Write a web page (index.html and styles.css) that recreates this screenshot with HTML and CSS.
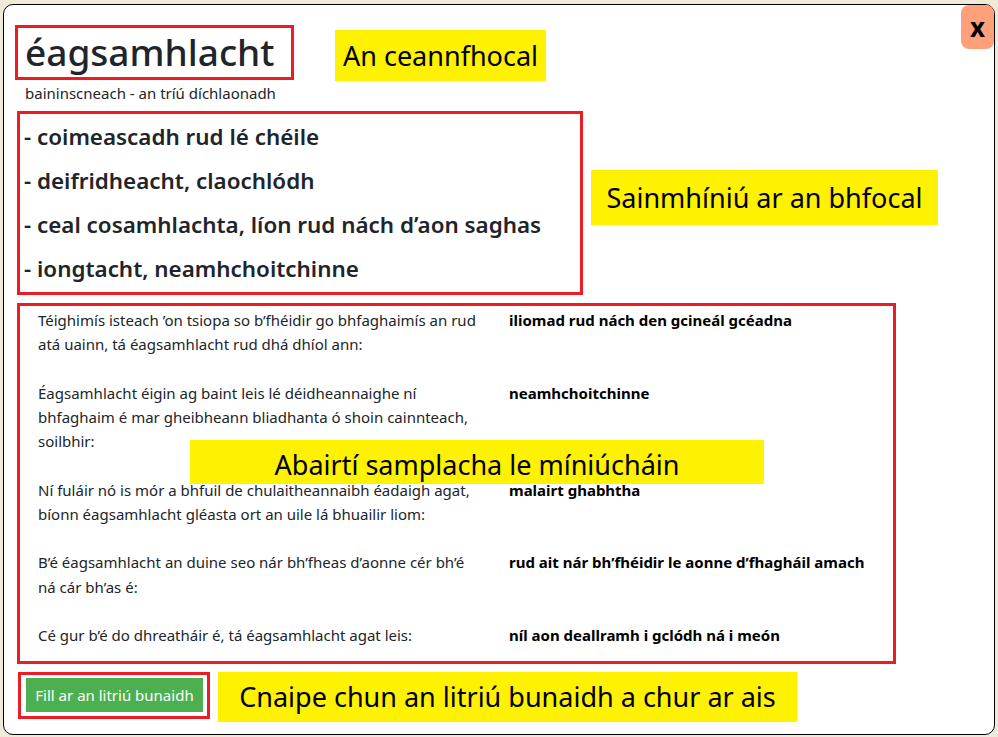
FILE: index.html
```html
<!DOCTYPE html>
<html lang="ga">
<head>
<meta charset="utf-8">
<title>éagsamhlacht</title>
<link rel="stylesheet" href="styles.css">
</head>
<body>
<div class="panel">
  <button class="close" type="button">x</button>

  <div class="headword-box"><h1 class="headword">éagsamhlacht</h1></div>
  <div class="gender">baininscneach - an tríú díchlaonadh</div>

  <div class="defs">
    <div class="def">- coimeascadh rud lé chéile</div>
    <div class="def">- deifridheacht, claochlódh</div>
    <div class="def">- ceal cosamhlachta, líon rud nách d’aon saghas</div>
    <div class="def">- iongtacht, neamhchoitchinne</div>
  </div>

  <div class="examples">
    <div class="ex">Téighimís isteach ’on tsiopa so b’fhéidir go bhfaghaimís an rud atá uainn, tá éagsamhlacht rud dhá dhíol ann:</div>
    <div class="gloss">iliomad rud nách den gcineál gcéadna</div>
    <div class="ex">Éagsamhlacht éigin ag baint leis lé déidheannaighe ní bhfaghaim é mar gheibheann bliadhanta ó shoin cainnteach, soilbhir:</div>
    <div class="gloss">neamhchoitchinne</div>
    <div class="ex">Ní fuláir nó is mór a bhfuil de chulaitheannaibh éadaigh agat, bíonn éagsamhlacht gléasta ort an uile lá bhuailir liom:</div>
    <div class="gloss">malairt ghabhtha</div>
    <div class="ex">B’é éagsamhlacht an duine seo nár bh’fheas d’aonne cér bh’é ná cár bh’as é:</div>
    <div class="gloss">rud ait nár bh’fhéidir le aonne d’fhagháil amach</div>
    <div class="ex">Cé gur b’é do dhreatháir é, tá éagsamhlacht agat leis:</div>
    <div class="gloss">níl aon deallramh i gclódh ná i meón</div>
  </div>

  <div class="btn-box"><button class="restore" type="button">Fill ar an litriú bunaidh</button></div>

  <div class="note note-head">An ceannfhocal</div>
  <div class="note note-def">Sainmhíniú ar an bhfocal</div>
  <div class="note note-ex">Abairtí samplacha le míniúcháin</div>
  <div class="note note-btn">Cnaipe chun an litriú bunaidh a chur ar ais</div>
</div>
</body>
</html>
```

FILE: styles.css
```css
html, body {
  margin: 0;
  padding: 0;
}
body {
  background: #f0ead8;
  font-family: "Noto Sans", "Open Sans", sans-serif;
  color: #212529;
  width: 998px;
  height: 737px;
  overflow: hidden;
}
.panel {
  position: relative;
  box-sizing: border-box;
  margin: 4px 3px 0 3px;
  width: 992px;
  height: 731px;
  background: #fff;
  border: 1px solid #000;
  border-radius: 10px;
  padding: 20px 0 0 11px;
}
.close {
  position: absolute;
  top: 0;
  right: 0;
  width: 33px;
  height: 44px;
  border: 0;
  border-radius: 8px;
  background: #ffa07a;
  color: #000;
  font-family: "Noto Sans", sans-serif;
  font-weight: 700;
  font-size: 26px;
  line-height: 40px;
  padding: 0;
}
.headword-box {
  display: inline-block;
  box-sizing: border-box;
  width: 279px;
  height: 55px;
  border: 3px solid #ed1c24;
  padding: 0 0 0 7px;
}
.headword {
  margin: 0;
  font-size: 37px;
  font-weight: 500;
  line-height: 47px;
  white-space: nowrap;
}
.gender {
  font-size: 15px;
  line-height: 18px;
  margin: 4px 0 0 10px;
}
.defs {
  box-sizing: border-box;
  width: 566px;
  height: 184px;
  margin: 9px 0 0 2px;
  border: 3px solid #ed1c24;
  padding: 1px 0 0 4px;
}
.def {
  height: 44px;
  line-height: 44px;
  font-size: 22.4px;
  font-weight: 600;
  white-space: nowrap;
}
.examples {
  box-sizing: border-box;
  width: 879px;
  height: 361px;
  margin: 8px 0 0 2px;
  border: 3px solid #ed1c24;
  padding: 2px 0 0 18px;
  display: grid;
  grid-template-columns: 438px 1fr;
  column-gap: 33px;
  row-gap: 24.3px;
  align-content: start;
  font-size: 15px;
  line-height: 24.2px;
}
.ex {
  color: #212529;
}
.gloss {
  font-weight: 700;
  color: #000;
}
.btn-box {
  box-sizing: border-box;
  width: 192px;
  height: 47px;
  margin: 8px 0 0 3px;
  border: 3px solid #ed1c24;
  padding: 3px 0 0 5px;
}
.restore {
  display: block;
  width: 177px;
  height: 34px;
  border: 0;
  background: #4caf50;
  color: #fff;
  font-family: "Noto Sans", sans-serif;
  font-size: 15px;
  padding: 0;
}
.note {
  position: absolute;
  box-sizing: border-box;
  background: #fff200;
  color: #000;
  font-size: 27px;
  text-align: center;
  white-space: nowrap;
}
.note-head {
  left: 331px;
  top: 25px;
  width: 211px;
  height: 51px;
  line-height: 51px;
}
.note-def {
  left: 587px;
  top: 165px;
  width: 347px;
  height: 55px;
  line-height: 55px;
}
.note-ex {
  left: 186px;
  top: 435px;
  width: 574px;
  height: 44px;
  line-height: 50px;
}
.note-btn {
  left: 214px;
  top: 667px;
  width: 579px;
  height: 50px;
  line-height: 50px;
}
```
